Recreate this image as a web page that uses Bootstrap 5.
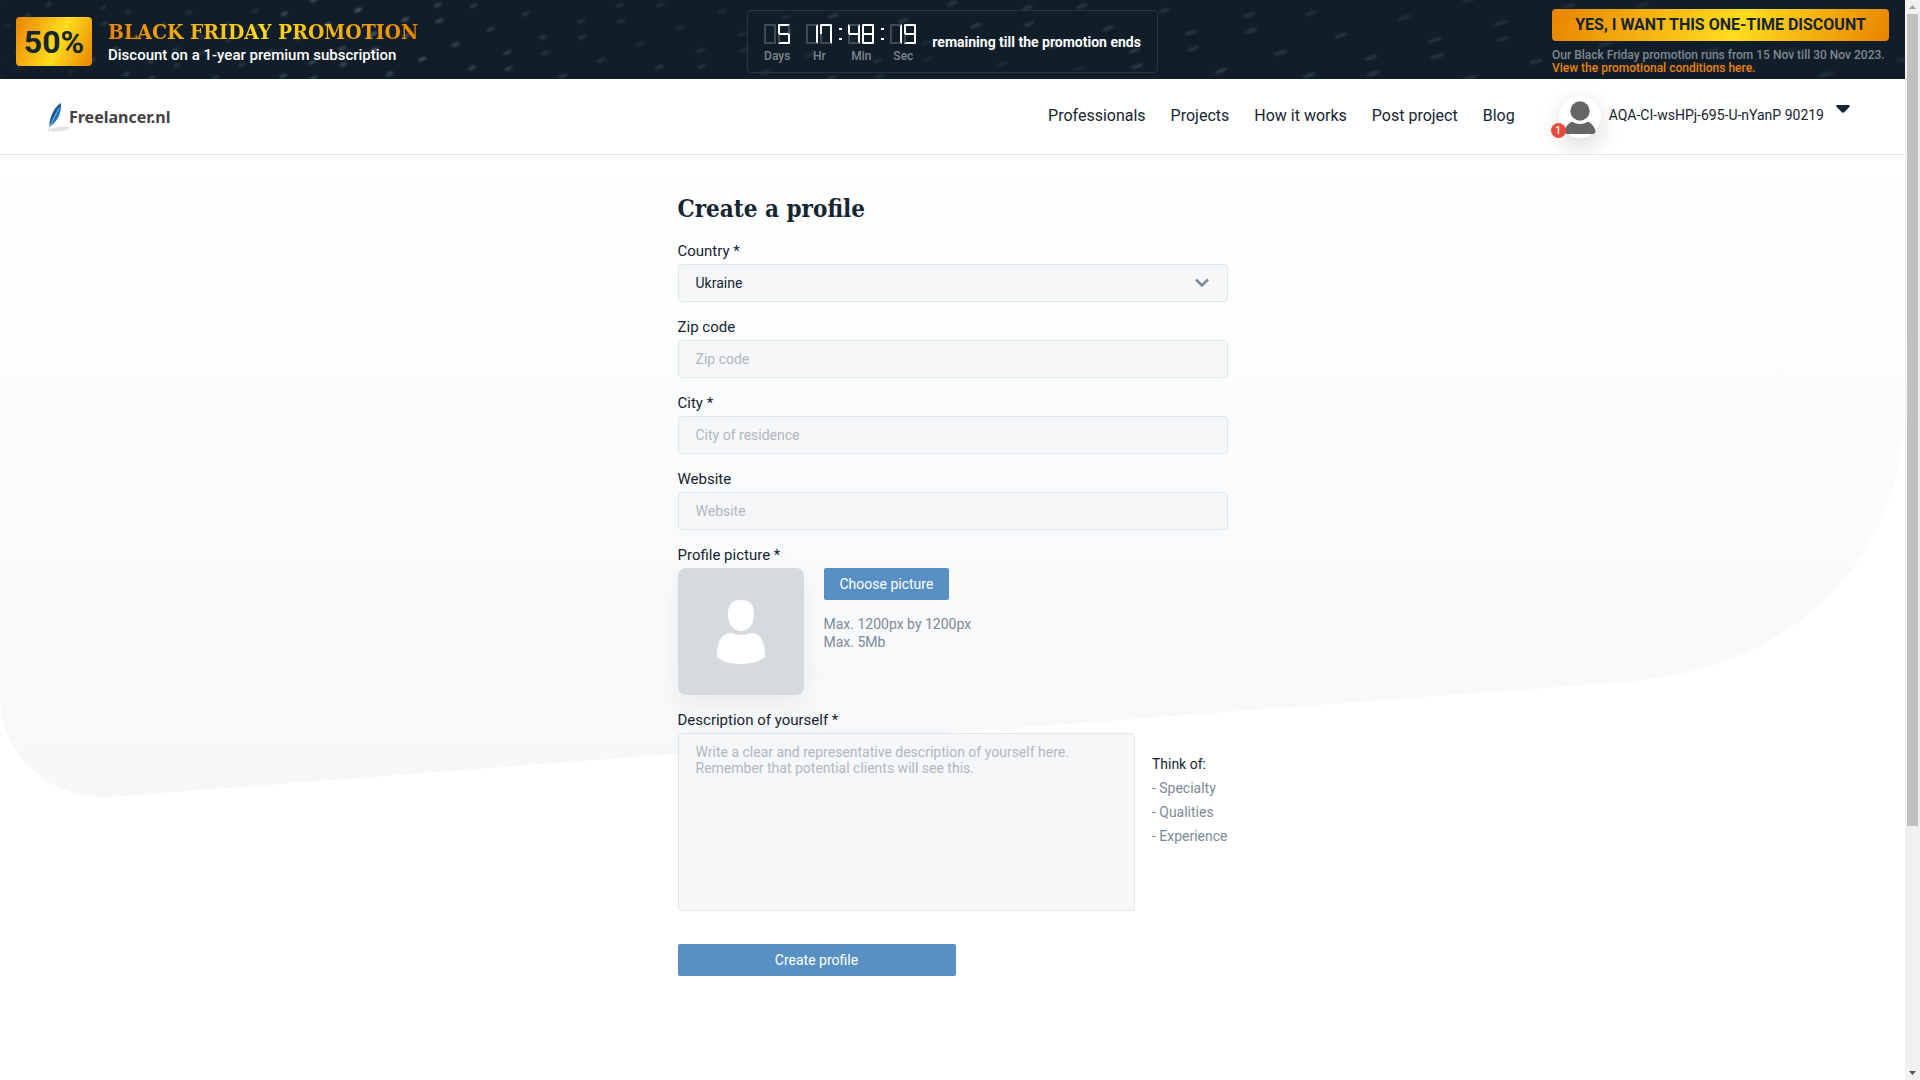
<!DOCTYPE html>
<html lang="en">
<head>
<meta charset="utf-8">
<meta name="viewport" content="width=device-width, initial-scale=1">
<title>Create a profile - Freelancer.nl</title>
<link href="https://cdn.jsdelivr.net/npm/bootstrap@5.3.0/dist/css/bootstrap.min.css" rel="stylesheet">
<style>
:root { --ink: #152532; --muted: #7b8b99; --accent: #5990c3; --line: #e0e6ea; --field: #f6f7f9; }
body { font-family: Roboto, sans-serif; color: var(--ink); font-size: 14px; background: #fff; }
.slab { font-family: "DejaVu Serif Condensed", "DejaVu Serif", serif; font-weight: 700; }

.promo { background: #111e29; height: 79px; padding: 4px 16px 0; color: #fff; }
.promo-side { flex: 1 1 0; }
.streaks { z-index: 0; }
.promo-item { z-index: 1; }
.gold { background: linear-gradient(115deg, #e98300 0%, #ffdc1e 55%, #e98300 100%); }
.promo-percent { width: 76px; height: 49px; border-radius: 4px; color: var(--ink); font-size: 32px; font-weight: 700; }
.promo-title { font-size: 21px; line-height: 26px; background: linear-gradient(90deg, #e98300, #ffdc1e 50%, #e98300); -webkit-background-clip: text; background-clip: text; color: transparent; }
.promo-sub { font-size: 15px; line-height: 20px; font-weight: 500; }
.promo-timer { height: 63px; padding: 0 16px; border: 1px solid #2a3540; border-radius: 4px; }
.timer-digits { padding-top: 4px; }
.timer-unit { font-size: 12px; line-height: 14px; margin-top: 5px; font-weight: 500; color: #7d858c; }
.timer-text { font-weight: 700; line-height: 20px; }
.promo-offer { min-width: 337px; }
.promo-btn { border-radius: 4px; color: var(--ink); font-size: 16px; font-weight: 700; line-height: 32px; height: 32px; padding: 0; }
.promo-note { font-size: 12px; line-height: 13px; font-weight: 500; color: #808890; }
.promo-note a { color: #e98300; }

.topbar { height: 76px; border-bottom: 1px solid #e4e8ea; padding: 0 55px 0 48px; background: #fff; }
.brand { font-family: "Noto Sans", sans-serif; font-weight: 700; font-size: 16px; line-height: 24px; color: #444; }
.main-links { gap: 25px; font-size: 16px; padding-bottom: 2px; }
.main-links a, .account { color: var(--ink); }
.account { font-size: 14px; margin-left: 44px; }
.account-name { padding-bottom: 2px; }
.avatar { width: 42px; height: 42px; box-shadow: 0 8px 24px rgba(0,0,0,.16); }
.alerts { left: -8px; bottom: 0; width: 15px; height: 15px; font-size: 10px; font-weight: 500; line-height: 15px; background: #e84a40; color: #fff; }

.backdrop { height: 643px; z-index: 0; }
.profile { width: 550px; max-width: 100%; padding-top: 36px; z-index: 1; }
.profile h1 { font-size: 24px; line-height: 36px; margin: 0 0 13px; }
.profile .form-label { display: block; font-size: 15px; line-height: 22px; margin: 0 0 2px; }
.profile .form-control, .profile .form-select { font-size: 14px; line-height: 16px; color: var(--ink); background-color: var(--field); border: 1px solid var(--line); border-radius: 4px; padding: 10px 17px; }
.profile .form-select { background-image: url("data:image/svg+xml,%3csvg xmlns='http://www.w3.org/2000/svg' viewBox='0 0 14 10'%3e%3cpath fill='none' stroke='%237b8b99' stroke-width='2.5' d='M1 1.5l6 6 6-6'/%3e%3c/svg%3e"); background-size: 14px 10px; background-position: right 18px center; }
.profile .form-control::placeholder { color: #b0b8c0; opacity: 1; }
.field-group { margin-bottom: 14px; }
.picture { width: 126px; height: 127px; border-radius: 8px; background: #d5dade; box-shadow: 0 8px 24px rgba(0,0,0,.06); }
.btn-accent { --bs-btn-color: #fff; --bs-btn-bg: var(--accent); --bs-btn-hover-color: #fff; --bs-btn-hover-bg: #4a80b3; --bs-btn-border-width: 0; --bs-btn-border-radius: 2px; --bs-btn-font-size: 14px; --bs-btn-line-height: 20px; --bs-btn-padding-y: 6px; --bs-btn-padding-x: 16px; }
.hint { color: var(--muted); }
.limits { margin-top: 15px; line-height: 18px; }
.profile textarea.form-control { height: 178px; resize: none; }
.about-row { gap: 17px; }
.tips { line-height: 24px; padding-top: 19px; white-space: nowrap; }
.tips-title { color: var(--ink); }
.submit { width: 278px; margin-top: 33px; }

.scroll-track { width: 15px; height: 100vh; top: 0; background: #f1f1f1; }
.scroll-thumb { width: 11px; flex: 0 0 812px; background: #c1c1c1; }
</style>
</head>
<body>
<div class="d-flex">
<div class="flex-grow-1 min-vh-100">
  <section class="promo position-relative d-flex align-items-center">
    <svg class="streaks position-absolute top-0 start-0 w-100 h-100" id="streaks" aria-hidden="true"></svg>
    <div class="promo-side promo-item d-flex align-items-center gap-3">
      <div class="promo-percent gold d-flex align-items-center justify-content-center">50%</div>
      <div><div class="promo-title slab">BLACK FRIDAY PROMOTION</div><div class="promo-sub">Discount on a 1-year premium subscription</div></div>
    </div>
    <div class="promo-timer promo-item d-flex align-items-center">
      <div id="timer" class="timer-digits d-flex"></div>
      <div class="timer-text ms-3">remaining till the promotion ends</div>
    </div>
    <div class="promo-side promo-item d-flex justify-content-end">
      <div class="promo-offer d-flex flex-column">
        <button type="button" class="btn promo-btn gold border-0">YES, I WANT THIS ONE-TIME DISCOUNT</button>
        <div class="promo-note mt-2">Our Black Friday promotion runs from 15 Nov till 30 Nov 2023.<br><a class="text-decoration-none" href="#">View the promotional conditions here.</a></div>
      </div>
    </div>
  </section>

  <header class="topbar d-flex align-items-center">
    <a href="#" class="brand d-flex align-items-center text-decoration-none me-auto">
      <svg width="21" height="30" viewBox="0 0 21 30" aria-hidden="true">
        <ellipse cx="12" cy="27" rx="10" ry="2.2" fill="#e2e2e2" transform="rotate(-7 12 27)"/>
        <path d="M13 1C7 5 1 14 1.500 25C8 21 14 12 13 1Z" fill="#2373b8"/>
        <path d="M13 1C7 5 3 12 1.500 23L9 10Z" fill="#13599a"/>
        <path d="M11 6C7 14 4 19 .5 29" fill="none" stroke="#a9cce8" stroke-width=".8"/>
      </svg>
      <span>Freelancer.nl</span>
    </a>
    <nav class="main-links d-flex">
      <a class="text-decoration-none" href="#">Professionals</a>
      <a class="text-decoration-none" href="#">Projects</a>
      <a class="text-decoration-none" href="#">How it works</a>
      <a class="text-decoration-none" href="#">Post project</a>
      <a class="text-decoration-none" href="#">Blog</a>
    </nav>
    <button type="button" class="account btn border-0 p-0 d-flex align-items-center gap-2">
      <span class="avatar position-relative rounded-circle bg-white">
        <svg class="d-block" width="42" height="42" viewBox="0 0 42 42" aria-hidden="true"><circle cx="21" cy="15" r="9.700" fill="#666"/><path d="M13 25.500q8 5 16 0q6 3 7.500 9.500q0 3-3 3h-25q-3 0-3-3q1.500-6.500 7.500-9.500Z" fill="#666"/></svg>
        <span class="alerts position-absolute rounded-circle">1</span>
      </span>
      <span class="account-name">AQA-CI-wsHPj-695-U-nYanP 90219</span>
      <svg class="mb-3 ms-1" width="14" height="8" viewBox="0 0 14 8" aria-hidden="true"><path d="M1 0h12q1.500 1 .3 2L8.500 7q-1.500 1.500-3 0L.7 2Q-.5 1 1 0Z" fill="#152532"/></svg>
    </button>
  </header>

  <main class="position-relative">
    <svg class="backdrop position-absolute top-0 start-0 w-100" viewBox="0 0 1905 643" preserveAspectRatio="none" aria-hidden="true">
      <defs><linearGradient id="fade" x1="0" y1="0" x2="0" y2="1"><stop offset="0" stop-color="#fefffe"/><stop offset=".4" stop-color="#fbfcfd"/><stop offset="1" stop-color="#f6f7f9"/></linearGradient></defs>
      <path d="M0 0H1905V260C1900 400 1800 510 1635 526L108 642C50 645 0 600 0 540Z" fill="url(#fade)"/>
    </svg>
    <form class="profile position-relative mx-auto">
      <h1 class="slab">Create a profile</h1>
      <div class="field-group"><label class="form-label" for="country">Country *</label>
        <select class="form-select" id="country"><option>Ukraine</option></select></div>
      <div class="field-group"><label class="form-label" for="zip">Zip code</label>
        <input class="form-control" id="zip" type="text" placeholder="Zip code"></div>
      <div class="field-group"><label class="form-label" for="city">City *</label>
        <input class="form-control" id="city" type="text" placeholder="City of residence"></div>
      <div class="field-group"><label class="form-label" for="site">Website</label>
        <input class="form-control" id="site" type="text" placeholder="Website"></div>
      <div class="field-group"><label class="form-label" for="choose">Profile picture *</label>
        <div class="d-flex">
          <div class="picture d-flex align-items-center justify-content-center">
            <svg width="48" height="64" viewBox="0 0 48 64" aria-hidden="true"><path d="M24 0C34 0 37 6 37 14C37 24 32 31 24 31S11 24 11 14C11 6 14 0 24 0Z" fill="#fff"/><path d="M15 33Q24 37 33 33C43 33 48 40 48 57Q40 64 24 64T0 57C0 40 5 33 15 33Z" fill="#fff"/></svg>
          </div>
          <div class="ms-3 ps-1">
            <button type="button" class="btn btn-accent" id="choose">Choose picture</button>
            <div class="limits hint">Max. 1200px by 1200px<br>Max. 5Mb</div>
          </div>
        </div></div>
      <label class="form-label" for="about">Description of yourself *</label>
      <div class="about-row d-flex">
        <textarea class="form-control" id="about" placeholder="Write a clear and representative description of yourself here.&#10;Remember that potential clients will see this."></textarea>
        <div class="tips hint"><div class="tips-title">Think of:</div>- Specialty<br>- Qualities<br>- Experience</div>
      </div>
      <button type="submit" class="btn btn-accent submit">Create profile</button>
    </form>
  </main>
</div>

<div class="scroll-track position-sticky d-flex flex-column align-items-center flex-shrink-0" aria-hidden="true">
  <svg width="15" height="14" viewBox="0 0 15 14"><path d="M4 9l3.500-4L11 9Z" fill="#a3a3a3"/></svg>
  <div class="scroll-thumb"></div>
  <svg class="mt-auto" width="15" height="14" viewBox="0 0 15 14"><path d="M4 5l3.500 4L11 5Z" fill="#505050"/></svg>
</div>
</div>
<script src="https://cdn.jsdelivr.net/npm/bootstrap@5.3.0/dist/js/bootstrap.bundle.min.js"></script>
<script>
// Seven segment digits: segments a..g inside a 12 x 20 cell
const SEG = {
  a: 'M0 0H12L10 2H2Z', b: 'M12 0V10H10V2Z', c: 'M12 10V20L10 18V10Z',
  d: 'M0 20H12L10 18H2Z', e: 'M0 10V20L2 18V10Z', f: 'M0 0V10H2V2Z', g: 'M1 9H11V11H1Z'
};
const LIT = { ' ': '', 1: 'bc', 4: 'bcfg', 5: 'acdfg', 7: 'abcf', 8: 'abcdefg', 9: 'abcdfg' };
const digit = (ch, x) => Object.entries(SEG).filter(([k]) => k !== 'g' || LIT[ch].includes(k)).map(([k, d]) =>
  `<path transform="translate(${x})" d="${d}" fill="#fff" opacity="${LIT[ch].includes(k) ? 1 : .2}"/>`).join('');
const colon = '<svg width="16" height="20" aria-hidden="true"><path d="M7 4h3v2h-3zM7 14h3v2h-3z" fill="#fff"/></svg>';
const gap = '<svg width="16" height="20" aria-hidden="true"></svg>';
document.getElementById('timer').innerHTML = [[' 5', 'Days'], ['17', 'Hr'], ['48', 'Min'], ['19', 'Sec']].map(([n, unit], i) =>
  (i ? (i > 1 ? colon : gap) : '') + `<div class="text-center"><svg class="d-block mx-auto" width="26" height="20" role="img" aria-label="${n.trim()}">${digit(n[0], 0)}${digit(n[1], 14)}</svg><div class="timer-unit">${unit}</div></div>`).join('');
// Light streaks in slanted rows over the dark banner, longer and sparser to the right
let marks = '<filter id="soft"><feGaussianBlur stdDeviation="1"/></filter><g filter="url(#soft)">';
for (let row = 0; row < 34; row++) {
  let x = -40 + (row % 3) * 9, y = 20 + row * 26;
  for (let n = 0; x < 1905; n++) {
    const step = 20 + x * .032, slope = .52 - x * .00018;
    x += step; y -= step * slope;
    if (y < 0) break;
    if (y > 79) continue;
    const glow = Math.exp(-(((x - 360) / 90) ** 2)) * .25;
    const light = .12 + glow + ((row * 7 + n * 5) % 6) * .025;
    marks += `<ellipse cx="${x}" cy="${y}" rx="${3 + x * .003}" ry="1.700" fill="#8b98a4" opacity="${light}" transform="rotate(${-25 + x * .006} ${x} ${y})"/>`;
  }
}
document.getElementById('streaks').innerHTML = marks + '</g>';
</script>
</body>
</html>
